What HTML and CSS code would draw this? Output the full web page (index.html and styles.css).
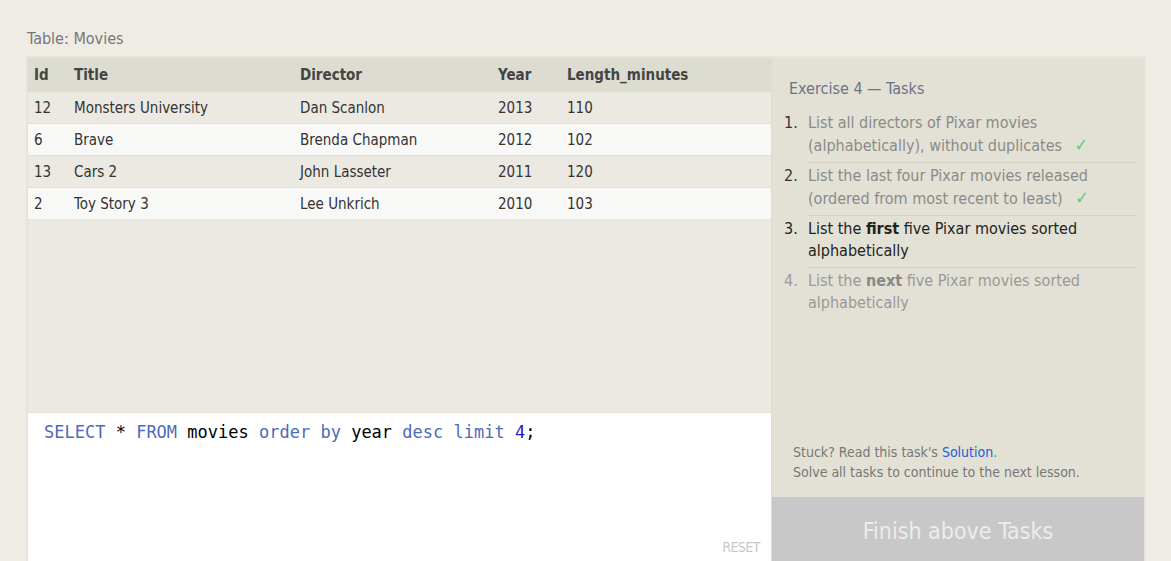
FILE: index.html
```html
<!DOCTYPE html>
<html>
<head>
<meta charset="utf-8">
<link rel="stylesheet" href="styles.css">
</head>
<body>
<div class="page">
  <div class="table-label">Table: Movies</div>
  <div class="workspace">
    <div class="left">
      <div class="results">
        <table class="data">
          <thead>
            <tr><th class="c-id">Id</th><th class="c-title">Title</th><th class="c-dir">Director</th><th class="c-year">Year</th><th class="c-len">Length_minutes</th></tr>
          </thead>
          <tbody>
            <tr><td>12</td><td>Monsters University</td><td>Dan Scanlon</td><td>2013</td><td>110</td></tr>
            <tr><td>6</td><td>Brave</td><td>Brenda Chapman</td><td>2012</td><td>102</td></tr>
            <tr><td>13</td><td>Cars 2</td><td>John Lasseter</td><td>2011</td><td>120</td></tr>
            <tr><td>2</td><td>Toy Story 3</td><td>Lee Unkrich</td><td>2010</td><td>103</td></tr>
          </tbody>
        </table>
      </div>
      <div class="editor">
        <div class="code"><span class="kw">SELECT</span> * <span class="kw">FROM</span> movies <span class="kw">order</span> <span class="kw">by</span> year <span class="kw">desc</span> <span class="kw">limit</span> <span class="num">4</span>;</div>
        <div class="reset">RESET</div>
      </div>
    </div>
    <div class="right">
      <div class="tasks-head">Exercise 4 — Tasks</div>
      <ol class="tasks">
        <li class="done"><span class="n">1.</span><span class="t">List all directors of Pixar movies (alphabetically), without duplicates <span class="check">✓</span></span></li>
        <li class="done"><span class="n">2.</span><span class="t">List the last four Pixar movies released (ordered from most recent to least) <span class="check">✓</span></span></li>
        <li class="current"><span class="n">3.</span><span class="t">List the <b>first</b> five Pixar movies sorted alphabetically</span></li>
        <li class="todo"><span class="n">4.</span><span class="t">List the <b>next</b> five Pixar movies sorted alphabetically</span></li>
      </ol>
      <div class="stuck">
        <div>Stuck? Read this task's <a class="sol" href="#">Solution</a>.</div>
        <div>Solve all tasks to continue to the next lesson.</div>
      </div>
      <div class="finish">Finish above Tasks</div>
    </div>
  </div>
</div>
</body>
</html>
```
FILE: styles.css
```css
html, body {
  margin: 0;
  padding: 0;
  height: 100%;
  overflow: hidden;
}
body {
  background: #efece5;
  font-family: "DejaVu Sans", sans-serif;
  font-stretch: condensed;
}
.page {
  padding: 29px 25px 0 26px;
  box-sizing: border-box;
  height: 100%;
  display: flex;
  flex-direction: column;
}
.table-label {
  font-size: 16px;
  line-height: 20px;
  color: #777;
  padding-left: 1px;
  margin-bottom: 7px;
}
.workspace {
  display: flex;
  border: 2px solid #e7e5db;
  border-bottom: none;
  flex: 1;
  min-height: 0;
}
.left {
  width: 743px;
  display: flex;
  flex-direction: column;
  border-right: 1px solid #dedcd2;
}
.results {
  height: 354px;
  background: #ebe9e1;
  border-bottom: 1px solid #e2e0d6;
}
.data {
  width: 100%;
  border-collapse: collapse;
  font-size: 15px;
  color: #333;
}
.data th {
  background: #dcdcd0;
  text-align: left;
  font-weight: bold;
  color: #444;
  height: 33px;
  padding: 0 0 0 6px;
  font-size: 15px;
}
.data td {
  height: 31px;
  padding: 0 0 0 6px;
  border-top: 1px solid #dfddd5;
}
.data tbody tr:nth-child(even) td {
  background: #f8f8f6;
}
.data tbody tr:nth-child(odd) td {
  background: #ebe9e1;
}
.c-id { width: 34px; }
.c-title { width: 220px; }
.c-dir { width: 192px; }
.c-year { width: 63px; }
.editor {
  flex: 1;
  background: #fff;
  display: flex;
  flex-direction: column;
  justify-content: space-between;
  padding: 7px 11px 6px 16px;
}
.code {
  font-family: "DejaVu Sans Mono", monospace;
  font-size: 17px;
  line-height: 24px;
  color: #000;
}
.kw { color: #4e6ab9; }
.num { color: #2e16c8; }
.reset {
  align-self: flex-end;
  font-size: 14px;
  letter-spacing: -0.5px;
  color: #c8c8c8;
  line-height: 16px;
}
.right {
  width: 372px;
  background: #e3e1d5;
  display: flex;
  flex-direction: column;
}
.tasks-head {
  font-size: 16px;
  color: #6b7286;
  padding: 20px 0 0 17px;
  line-height: 22px;
  margin-bottom: 9px;
}
.tasks {
  list-style: none;
  margin: 0;
  padding: 0 8px 0 12px;
  font-size: 16px;
  line-height: 22px;
}
.tasks li {
  display: flex;
  padding: 3px 0 5px;
}
.tasks li + li {
  position: relative;
}
.tasks li + li::before {
  content: "";
  position: absolute;
  top: 0;
  left: 24px;
  right: 0;
  border-top: 1px solid #d5d3c7;
}
.n {
  width: 24px;
  flex: none;
}
.done .n { color: #333; }
.done .t { color: #8a8a8a; }
.current { color: #222; }
.todo { color: #999; }
.todo b { color: #888; }
.check {
  color: #5ccf7a;
  font-size: 18px;
  margin-left: 8px;
}
.stuck {
  margin-top: auto;
  padding: 0 0 15px 21px;
  font-size: 14px;
  line-height: 20px;
  color: #777;
}
.sol {
  color: #1a5fd8;
  text-decoration: none;
}
.finish {
  height: 64px;
  flex: none;
  background: #c8c8c8;
  color: #ececec;
  font-size: 23px;
  padding-top: 3px;
  box-sizing: border-box;
  display: flex;
  align-items: center;
  justify-content: center;
}
```
